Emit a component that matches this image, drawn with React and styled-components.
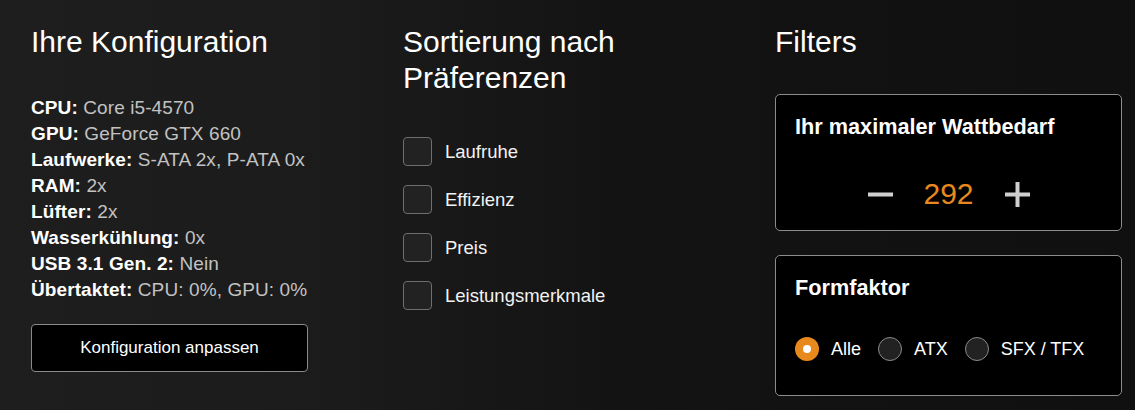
import React, { useState } from "react";
import styled, { createGlobalStyle } from "styled-components";

const GlobalStyle = createGlobalStyle`
  html, body {
    margin: 0;
    padding: 0;
    background: #111;
  }
  body {
    font-family: "Liberation Sans", Arial, Helvetica, sans-serif;
    color: #fff;
  }
`;

const Page = styled.div`
  display: grid;
  grid-template-columns: repeat(3, 347px);
  column-gap: 25px;
  padding: 24px 0 0 31px;
  height: 410px;
  box-sizing: border-box;
  background: linear-gradient(90deg, #1e1e1e 0%, #1b1b1b 30%, #131313 55%, #101010 100%);
  overflow: hidden;
`;

const Column = styled.section`
  display: flex;
  flex-direction: column;
`;

const Heading = styled.h2`
  margin: 0 0 ${(p) => p.$gap}px;
  font-size: 30px;
  line-height: 36px;
  font-weight: 400;
  color: #fff;
`;

const SpecList = styled.ul`
  list-style: none;
  margin: 0;
  padding: 0;
  font-size: 19px;
  line-height: 26px;
  letter-spacing: 0.1px;
`;

const SpecLabel = styled.strong`
  color: #fff;
  font-weight: 700;
`;

const SpecValue = styled.span`
  color: #c2c2c2;
`;

const OutlineButton = styled.button`
  margin-top: 21px;
  width: 277px;
  height: 48px;
  background: #000;
  border: 1px solid #8a8a8a;
  border-radius: 4px;
  color: #fff;
  font-family: inherit;
  font-size: 17px;
  cursor: pointer;
`;

const CheckList = styled.div`
  display: flex;
  flex-direction: column;
  gap: 19px;
`;

const CheckRow = styled.label`
  display: flex;
  align-items: center;
  gap: 13px;
  font-size: 18.5px;
  color: #f2f2f2;
  cursor: pointer;
`;

const Box = styled.span`
  width: 27px;
  height: 27px;
  border: 1px solid #6e6e6e;
  border-radius: 4px;
  background: #222;
  flex: none;
`;

const Card = styled.div`
  background: #000;
  border: 1px solid #8c8c8c;
  border-radius: 5px;
  padding: 20px 19px ${(p) => p.$bottom}px;
  margin-bottom: 24px;
`;

const CardTitle = styled.h3`
  margin: 0;
  font-size: 21.7px;
  line-height: 24px;
  font-weight: 700;
  color: #fff;
`;

const Stepper = styled.div`
  margin-top: 35px;
  height: 40px;
  display: flex;
  align-items: center;
  justify-content: center;
  gap: 30px;
`;

const StepButton = styled.button`
  background: none;
  border: 0;
  padding: 0;
  width: 25px;
  height: 25px;
  display: flex;
  align-items: center;
  justify-content: center;
  cursor: pointer;
`;

const Value = styled.span`
  font-size: 30px;
  color: #e8891e;
  min-width: 52px;
  text-align: center;
`;

const RadioGroup = styled.div`
  margin-top: 37px;
  display: flex;
  align-items: center;
  gap: 17px;
`;

const RadioItem = styled.label`
  display: flex;
  align-items: center;
  gap: 12px;
  font-size: 18px;
  color: #fff;
  cursor: pointer;
`;

const Dot = styled.span`
  width: 24px;
  height: 24px;
  box-sizing: border-box;
  border-radius: 50%;
  flex: none;
  display: flex;
  align-items: center;
  justify-content: center;
  background: ${(p) => (p.$on ? "#e8891e" : "#222")};
  border: ${(p) => (p.$on ? "none" : "1.5px solid #8a8a8a")};

  &::after {
    content: "";
    width: 8px;
    height: 8px;
    border-radius: 50%;
    background: #fff;
    display: ${(p) => (p.$on ? "block" : "none")};
  }
`;

const specs = [
  ["CPU:", "Core i5-4570"],
  ["GPU:", "GeForce GTX 660"],
  ["Laufwerke:", "S-ATA 2x, P-ATA 0x"],
  ["RAM:", "2x"],
  ["Lüfter:", "2x"],
  ["Wasserkühlung:", "0x"],
  ["USB 3.1 Gen. 2:", "Nein"],
  ["Übertaktet:", "CPU: 0%, GPU: 0%"],
];

const prefs = ["Laufruhe", "Effizienz", "Preis", "Leistungsmerkmale"];
const forms = ["Alle", "ATX", "SFX / TFX"];

function Minus() {
  return (
    <svg width="25" height="25" viewBox="0 0 25 25">
      <rect x="0" y="10.5" width="25" height="4" fill="#cfcfcf" />
    </svg>
  );
}

function Plus() {
  return (
    <svg width="25" height="25" viewBox="0 0 25 25">
      <rect x="0" y="10.5" width="25" height="4" fill="#cfcfcf" />
      <rect x="10.5" y="0" width="4" height="25" fill="#cfcfcf" />
    </svg>
  );
}

export default function App() {
  const [watt, setWatt] = useState(292);
  const [form, setForm] = useState("Alle");

  return (
    <>
      <GlobalStyle />
      <Page>
        <Column>
          <Heading $gap={35}>Ihre Konfiguration</Heading>
          <SpecList>
            {specs.map(([label, value]) => (
              <li key={label}>
                <SpecLabel>{label}</SpecLabel> <SpecValue>{value}</SpecValue>
              </li>
            ))}
          </SpecList>
          <OutlineButton>Konfiguration anpassen</OutlineButton>
        </Column>

        <Column>
          <Heading $gap={41}>Sortierung nach Präferenzen</Heading>
          <CheckList>
            {prefs.map((p) => (
              <CheckRow key={p}>
                <Box />
                {p}
              </CheckRow>
            ))}
          </CheckList>
        </Column>

        <Column>
          <Heading $gap={34}>Filters</Heading>
          <Card $bottom={16}>
            <CardTitle>Ihr maximaler Wattbedarf</CardTitle>
            <Stepper>
              <StepButton aria-label="weniger" onClick={() => setWatt(watt - 1)}>
                <Minus />
              </StepButton>
              <Value>{watt}</Value>
              <StepButton aria-label="mehr" onClick={() => setWatt(watt + 1)}>
                <Plus />
              </StepButton>
            </Stepper>
          </Card>
          <Card $bottom={34}>
            <CardTitle>Formfaktor</CardTitle>
            <RadioGroup>
              {forms.map((f) => (
                <RadioItem key={f} onClick={() => setForm(f)}>
                  <Dot $on={form === f} />
                  {f}
                </RadioItem>
              ))}
            </RadioGroup>
          </Card>
        </Column>
      </Page>
    </>
  );
}
